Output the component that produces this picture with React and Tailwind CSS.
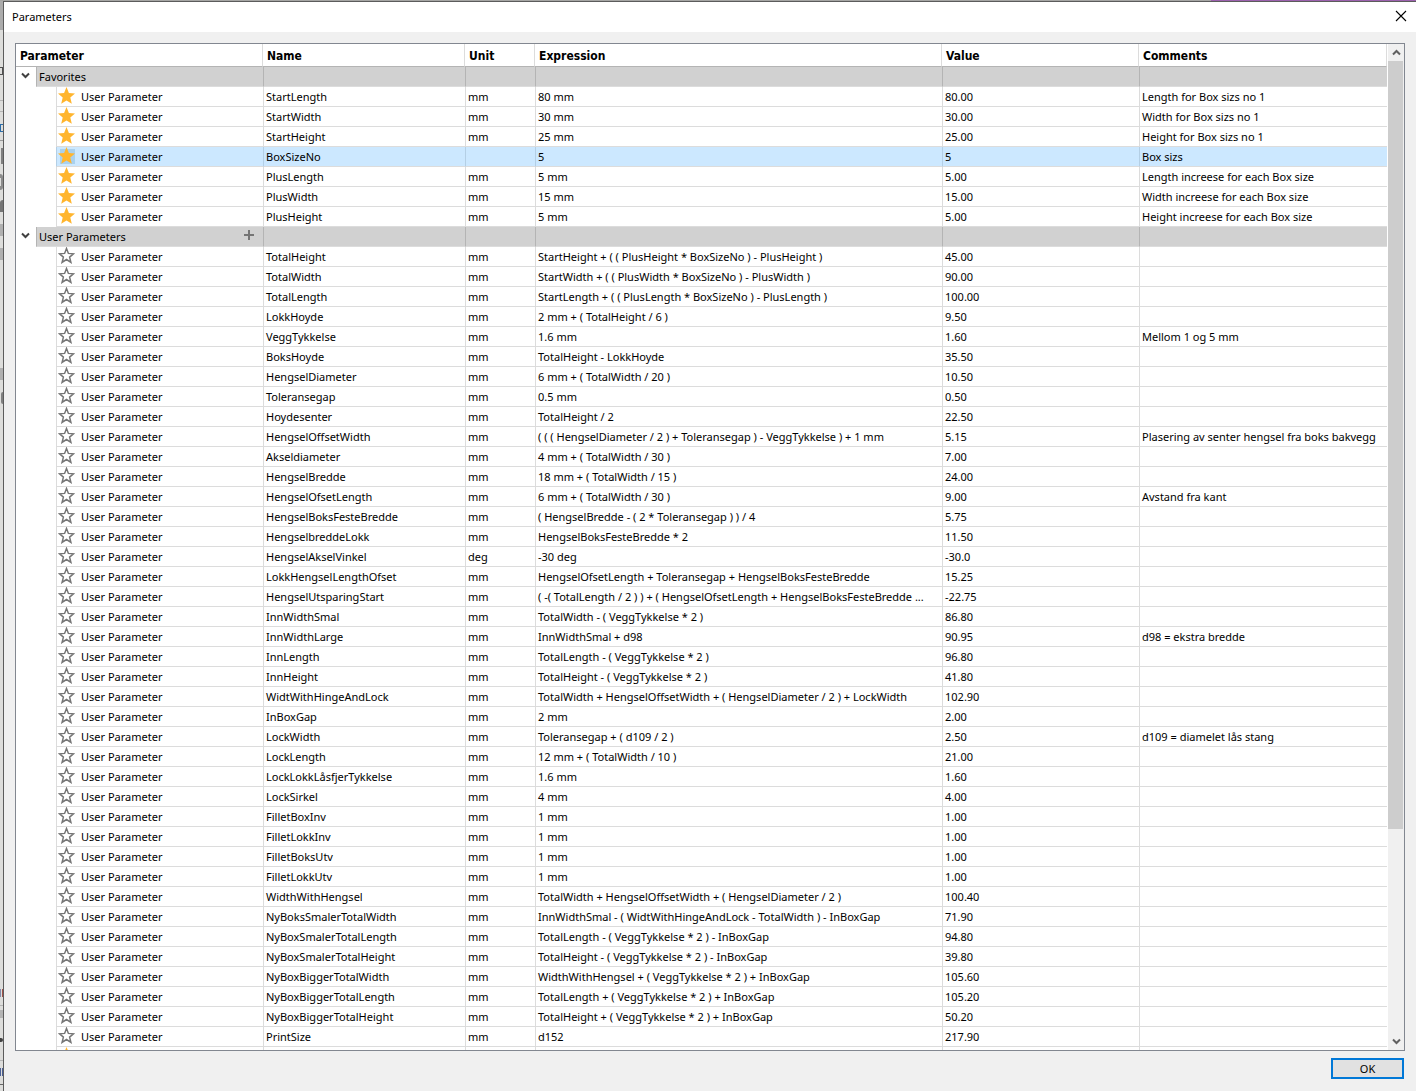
import { useState } from "react";

const favorites = [
  ["StartLength", "mm", "80 mm", "80.00", "Length for Box sizs no 1"],
  ["StartWidth", "mm", "30 mm", "30.00", "Width for Box sizs no 1"],
  ["StartHeight", "mm", "25 mm", "25.00", "Height for Box sizs no 1"],
  ["BoxSizeNo", "", "5", "5", "Box sizs"],
  ["PlusLength", "mm", "5 mm", "5.00", "Length increese for each Box size"],
  ["PlusWidth", "mm", "15 mm", "15.00", "Width increese for each Box size"],
  ["PlusHeight", "mm", "5 mm", "5.00", "Height increese for each Box size"],
];

const userParameters = [
  ["TotalHeight", "mm", "StartHeight + ( ( PlusHeight * BoxSizeNo ) - PlusHeight )", "45.00", ""],
  ["TotalWidth", "mm", "StartWidth + ( ( PlusWidth * BoxSizeNo ) - PlusWidth )", "90.00", ""],
  ["TotalLength", "mm", "StartLength + ( ( PlusLength * BoxSizeNo ) - PlusLength )", "100.00", ""],
  ["LokkHoyde", "mm", "2 mm + ( TotalHeight / 6 )", "9.50", ""],
  ["VeggTykkelse", "mm", "1.6 mm", "1.60", "Mellom 1 og 5 mm"],
  ["BoksHoyde", "mm", "TotalHeight - LokkHoyde", "35.50", ""],
  ["HengselDiameter", "mm", "6 mm + ( TotalWidth / 20 )", "10.50", ""],
  ["Toleransegap", "mm", "0.5 mm", "0.50", ""],
  ["Hoydesenter", "mm", "TotalHeight / 2", "22.50", ""],
  ["HengselOffsetWidth", "mm", "( ( ( HengselDiameter / 2 ) + Toleransegap ) - VeggTykkelse ) + 1 mm", "5.15", "Plasering av senter hengsel fra boks bakvegg"],
  ["Akseldiameter", "mm", "4 mm + ( TotalWidth / 30 )", "7.00", ""],
  ["HengselBredde", "mm", "18 mm + ( TotalWidth / 15 )", "24.00", ""],
  ["HengselOfsetLength", "mm", "6 mm + ( TotalWidth / 30 )", "9.00", "Avstand fra kant"],
  ["HengselBoksFesteBredde", "mm", "( HengselBredde - ( 2 * Toleransegap ) ) / 4", "5.75", ""],
  ["HengselbreddeLokk", "mm", "HengselBoksFesteBredde * 2", "11.50", ""],
  ["HengselAkselVinkel", "deg", "-30 deg", "-30.0", ""],
  ["LokkHengselLengthOfset", "mm", "HengselOfsetLength + Toleransegap + HengselBoksFesteBredde", "15.25", ""],
  ["HengselUtsparingStart", "mm", "( -( TotalLength / 2 ) ) + ( HengselOfsetLength + HengselBoksFesteBredde ...", "-22.75", ""],
  ["InnWidthSmal", "mm", "TotalWidth - ( VeggTykkelse * 2 )", "86.80", ""],
  ["InnWidthLarge", "mm", "InnWidthSmal + d98", "90.95", "d98 = ekstra bredde"],
  ["InnLength", "mm", "TotalLength - ( VeggTykkelse * 2 )", "96.80", ""],
  ["InnHeight", "mm", "TotalHeight - ( VeggTykkelse * 2 )", "41.80", ""],
  ["WidtWithHingeAndLock", "mm", "TotalWidth + HengselOffsetWidth + ( HengselDiameter / 2 ) + LockWidth", "102.90", ""],
  ["InBoxGap", "mm", "2 mm", "2.00", ""],
  ["LockWidth", "mm", "Toleransegap + ( d109 / 2 )", "2.50", "d109 = diamelet lås stang"],
  ["LockLength", "mm", "12 mm + ( TotalWidth / 10 )", "21.00", ""],
  ["LockLokkLåsfjerTykkelse", "mm", "1.6 mm", "1.60", ""],
  ["LockSirkel", "mm", "4 mm", "4.00", ""],
  ["FilletBoxInv", "mm", "1 mm", "1.00", ""],
  ["FilletLokkInv", "mm", "1 mm", "1.00", ""],
  ["FilletBoksUtv", "mm", "1 mm", "1.00", ""],
  ["FilletLokkUtv", "mm", "1 mm", "1.00", ""],
  ["WidthWithHengsel", "mm", "TotalWidth + HengselOffsetWidth + ( HengselDiameter / 2 )", "100.40", ""],
  ["NyBoksSmalerTotalWidth", "mm", "InnWidthSmal - ( WidtWithHingeAndLock - TotalWidth ) - InBoxGap", "71.90", ""],
  ["NyBoxSmalerTotalLength", "mm", "TotalLength - ( VeggTykkelse * 2 ) - InBoxGap", "94.80", ""],
  ["NyBoxSmalerTotalHeight", "mm", "TotalHeight - ( VeggTykkelse * 2 ) - InBoxGap", "39.80", ""],
  ["NyBoxBiggerTotalWidth", "mm", "WidthWithHengsel + ( VeggTykkelse * 2 ) + InBoxGap", "105.60", ""],
  ["NyBoxBiggerTotalLength", "mm", "TotalLength + ( VeggTykkelse * 2 ) + InBoxGap", "105.20", ""],
  ["NyBoxBiggerTotalHeight", "mm", "TotalHeight + ( VeggTykkelse * 2 ) + InBoxGap", "50.20", ""],
  ["PrintSize", "mm", "d152", "217.90", ""],
];

const headers = ["Parameter", "Name", "Unit", "Expression", "Value", "Comments"];

const Star = ({ filled, selected }) => (
  <svg width="17" height="18" viewBox="0 0 17 18" className="block">
    {selected && <rect x="2" y="2" width="15" height="15" fill="#a9d1ee" />}
    {filled ? (
      <path d="M8.500 0l2.400 5.900 6.100.5-4.700 4 1.500 6.300-5.300-3.300-5.300 3.300 1.500-6.300-4.700-4 6.100-.5z" fill="#ffb52e" />
    ) : (
      <path
        d="M8.500 1.500l1.900 4.900 5.200.4-4 3.300 1.300 5.200-4.400-2.800-4.400 2.800 1.300-5.200-4-3.300 5.200-.4z"
        fill="#fff"
        stroke="#757575"
        strokeWidth="1.5"
      />
    )}
  </svg>
);

const Chevron = ({ up }) => (
  <svg width="9" height="7" viewBox="0 0 9 7">
    <path
      d={up ? "M1 5.500L4.500 2L8 5.500" : "M1 1.500L4.500 5L8 1.500"}
      fill="none"
      stroke="currentColor"
      strokeWidth="2"
    />
  </svg>
);

const GroupRow = ({ title, open, onToggle, canAdd }) => (
  <tr className="h-5">
    <td className="p-0">
      <div className="flex h-5">
        <button
          type="button"
          aria-label={`Toggle ${title}`}
          aria-expanded={open}
          onClick={onToggle}
          className="flex w-5 items-center bg-white pb-1 pl-[5px] text-[#404040]"
        >
          <Chevron />
        </button>
        <div className="flex flex-1 items-center justify-between border-b border-l border-[#b4b4b4] border-b-[#dcdcdc] bg-[#d1d1d1] pr-2 pl-[2px]">
          <span className="pt-px">{title}</span>
          {canAdd && (
            <button type="button" aria-label="Add user parameter" className="pb-[3px]">
              <svg width="12" height="12" viewBox="0 0 12 12" className="block">
                <path d="M6 1v10M1 6h10" stroke="#757575" strokeWidth="2" />
              </svg>
            </button>
          )}
        </div>
      </div>
    </td>
    {headers.slice(1).map((h) => (
      <td key={h} className="border-b border-l border-[#b4b4b4] border-b-[#dcdcdc] bg-[#d1d1d1] p-0" />
    ))}
  </tr>
);

const ParameterRow = ({ row, label = "User Parameter", favorite, selected, onSelect }) => {
  const cell = selected
    ? "border-[#b4cfe5] border-b-[#dcdcdc] bg-[#cce8ff]"
    : "border-[#dcdcdc] bg-white";

  return (
    <tr className="h-5" onClick={onSelect}>
      <td className="p-0">
        <div className={`ml-10 flex h-5 items-start border-b border-l ${cell}`}>
          <button
            type="button"
            aria-label={`Favorite ${row[0]}`}
            aria-pressed={favorite}
            className="ml-px"
          >
            <Star filled={favorite} selected={selected} />
          </button>
          <span className="pt-[2px] pl-[6px]">{label}</span>
        </div>
      </td>
      {row.map((text, i) => (
        <td key={i} className={`truncate border-b border-l p-0 pt-px pl-[2px] ${cell}`}>
          {text}
        </td>
      ))}
    </tr>
  );
};

// Sliver of the application window left visible behind the dialog
const Backdrop = () => (
  <div aria-hidden="true" className="flex w-[3px] shrink-0 flex-col overflow-hidden bg-[#dddddb]">
    <div className="h-[29px] shrink-0 bg-[#acacac]" />
    <div className="mt-[37px] h-2 shrink-0 border-y border-r border-[#505050]" />
    <div className="mt-[25px] h-px shrink-0 bg-[#b4b4b4]" />
    <div className="mt-[10px] h-px shrink-0 bg-[#b4b4b4]" />
    <div className="mt-[12px] h-2 shrink-0 border-y border-l border-[#2b6ca8]" />
    <div className="mt-2 h-px shrink-0 bg-[#999]" />
    <div className="mt-[7px] ml-px h-4 shrink-0 bg-[#808080]" />
    <div className="mt-[10px] h-4 shrink-0 rounded-r border-y-4 border-r-2 border-[#8c8c8c]" />
    <div className="mt-[10px] h-3 shrink-0 rounded-tl bg-[#757575]" />
    <div className="mt-[12px] h-3 shrink-0 bg-[#b0b0b0]" />
    <div className="mt-[12px] h-3 shrink-0 bg-[#b0b0b0]" />
    <div className="mt-[108px] h-3 shrink-0 bg-[#b0b0b0]" />
    <div className="mt-[12px] ml-px h-3 shrink-0 rounded-l bg-[#808080]" />
    <div className="flex-1" />
    <div className="h-2 shrink-0 border-r border-l border-[#a0524a] border-l-[#8088a8]" />
    <div className="mt-[8px] h-px shrink-0 bg-[#b4b4b4]" />
    <div className="mt-[4px] h-2 shrink-0 bg-[#b4b4b4]" />
    <div className="mt-[20px] h-1 shrink-0 rounded-r bg-[#404040]" />
    <div className="mt-[18px] h-px shrink-0 bg-[#b4b4b4]" />
    <div className="mt-[7px] h-2 shrink-0 border-r border-l border-[#4a5f94]" />
    <div className="mt-2 mb-[6px] h-px shrink-0 bg-[#666]" />
  </div>
);

const App = () => {
  const [selected, setSelected] = useState("BoxSizeNo");
  const [showFavorites, setShowFavorites] = useState(true);
  const [showUser, setShowUser] = useState(true);

  return (
    <div className="flex h-screen flex-col overflow-hidden font-['Noto_Sans',sans-serif] text-[11px] leading-4 text-black">
      <div className="flex h-px shrink-0">
        <div className="flex-1 bg-[#a6a6a4]" />
        <div className="w-[205px] bg-[#9c62ae]" />
      </div>

      <div className="flex min-h-0 flex-1">
        <Backdrop />

        <main className="flex min-w-0 flex-1 flex-col border-t border-l border-[#5c5c5c] bg-[#f0f0f0]">
          <header className="flex h-[30px] shrink-0 items-center justify-between bg-white pr-[9px] pl-2">
            <h1>Parameters</h1>
            <button type="button" aria-label="Close" className="pb-[2px]">
              <svg width="12" height="12" viewBox="0 0 12 12" className="block">
                <path d="M1 1l10 10M11 1L1 11" stroke="#000" strokeWidth="1.1" />
              </svg>
            </button>
          </header>

          <section className="mt-[11px] mr-[11px] ml-[11px] flex min-h-0 flex-1 border border-[#828790] bg-white">
            <div className="min-w-0 flex-1 overflow-hidden">
              <table className="w-full table-fixed border-separate border-spacing-0 whitespace-nowrap">
                <colgroup>
                  <col className="w-[247px]" />
                  <col className="w-[202px]" />
                  <col className="w-[70px]" />
                  <col className="w-[407px]" />
                  <col className="w-[197px]" />
                  <col />
                </colgroup>
                <thead>
                  <tr className="h-[23px] text-left font-['DejaVu_Sans_Condensed',sans-serif] text-[12px]">
                    {headers.map((h) => (
                      <th
                        key={h}
                        className="border-r border-b border-[#dcdcdc] border-b-[#b4b4b4] p-0 pt-[2px] pl-1 font-bold"
                      >
                        {h}
                      </th>
                    ))}
                  </tr>
                </thead>
                <tbody>
                  <GroupRow
                    title="Favorites"
                    open={showFavorites}
                    onToggle={() => setShowFavorites(!showFavorites)}
                  />
                  {showFavorites &&
                    favorites.map((row) => (
                      <ParameterRow
                        key={row[0]}
                        row={row}
                        favorite
                        selected={selected === row[0]}
                        onSelect={() => setSelected(row[0])}
                      />
                    ))}
                  <GroupRow
                    title="User Parameters"
                    open={showUser}
                    onToggle={() => setShowUser(!showUser)}
                    canAdd
                  />
                  {showUser &&
                    userParameters.map((row) => (
                      <ParameterRow
                        key={row[0]}
                        row={row}
                        favorite={false}
                        selected={selected === row[0]}
                        onSelect={() => setSelected(row[0])}
                      />
                    ))}
                  <ParameterRow row={["", "", "", "", ""]} label="" favorite />
                </tbody>
              </table>
            </div>

            <div className="ml-px flex w-4 shrink-0 flex-col bg-[#f0f0f0] text-[#606060]">
              <button type="button" aria-label="Scroll up" className="flex h-[17px] items-center justify-center">
                <Chevron up />
              </button>
              <div className="min-h-0 flex-1 pr-px">
                <div className="h-[79%] bg-[#cdcdcd]" />
              </div>
              <button type="button" aria-label="Scroll down" className="flex h-[17px] items-center justify-center">
                <Chevron />
              </button>
            </div>
          </section>

          <footer className="flex shrink-0 justify-end pt-[7px] pr-3 pb-3">
            <button
              type="button"
              className="h-[21px] w-[73px] border-2 border-[#0078d7] bg-[#e1e1e1] leading-none"
            >
              OK
            </button>
          </footer>
        </main>
      </div>
    </div>
  );
};

export default App;
